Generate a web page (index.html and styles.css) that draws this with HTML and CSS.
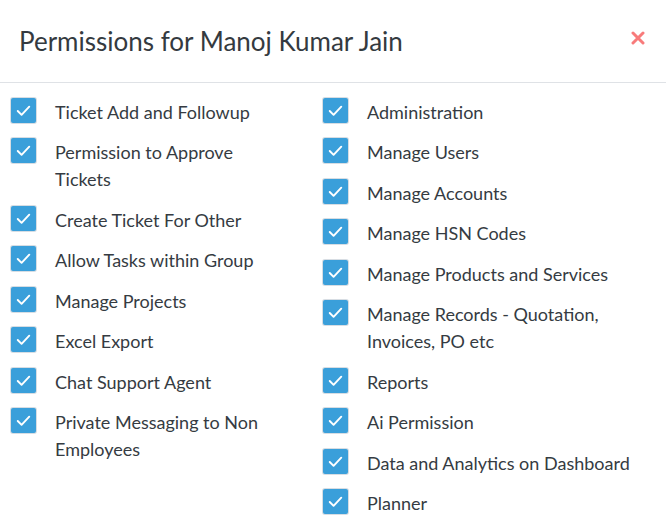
FILE: index.html
```html
<!DOCTYPE html>
<html>
<head>
<meta charset="utf-8">
<link rel="stylesheet" href="styles.css">
</head>
<body>
<div class="modal">
  <div class="header">
    <h2 class="title">Permissions for Manoj Kumar Jain</h2>
    <span class="close"><svg viewBox="0 0 14 14"><path d="M2 2L12 12M12 2L2 12"/></svg></span>
  </div>
  <div class="body">
    <div class="col left">
      <label class="item"><span class="box"><svg viewBox="0 0 26 26"><path d="M7 13.5l4 4 8-8.5"/></svg></span><span class="label">Ticket Add and Followup</span></label>
      <label class="item"><span class="box"><svg viewBox="0 0 26 26"><path d="M7 13.5l4 4 8-8.5"/></svg></span><span class="label">Permission to Approve Tickets</span></label>
      <label class="item"><span class="box"><svg viewBox="0 0 26 26"><path d="M7 13.5l4 4 8-8.5"/></svg></span><span class="label">Create Ticket For Other</span></label>
      <label class="item"><span class="box"><svg viewBox="0 0 26 26"><path d="M7 13.5l4 4 8-8.5"/></svg></span><span class="label">Allow Tasks within Group</span></label>
      <label class="item"><span class="box"><svg viewBox="0 0 26 26"><path d="M7 13.5l4 4 8-8.5"/></svg></span><span class="label">Manage Projects</span></label>
      <label class="item"><span class="box"><svg viewBox="0 0 26 26"><path d="M7 13.5l4 4 8-8.5"/></svg></span><span class="label">Excel Export</span></label>
      <label class="item"><span class="box"><svg viewBox="0 0 26 26"><path d="M7 13.5l4 4 8-8.5"/></svg></span><span class="label">Chat Support Agent</span></label>
      <label class="item"><span class="box"><svg viewBox="0 0 26 26"><path d="M7 13.5l4 4 8-8.5"/></svg></span><span class="label">Private Messaging to Non Employees</span></label>
    </div>
    <div class="col right">
      <label class="item"><span class="box"><svg viewBox="0 0 26 26"><path d="M7 13.5l4 4 8-8.5"/></svg></span><span class="label">Administration</span></label>
      <label class="item"><span class="box"><svg viewBox="0 0 26 26"><path d="M7 13.5l4 4 8-8.5"/></svg></span><span class="label">Manage Users</span></label>
      <label class="item"><span class="box"><svg viewBox="0 0 26 26"><path d="M7 13.5l4 4 8-8.5"/></svg></span><span class="label">Manage Accounts</span></label>
      <label class="item"><span class="box"><svg viewBox="0 0 26 26"><path d="M7 13.5l4 4 8-8.5"/></svg></span><span class="label">Manage HSN Codes</span></label>
      <label class="item"><span class="box"><svg viewBox="0 0 26 26"><path d="M7 13.5l4 4 8-8.5"/></svg></span><span class="label">Manage Products and Services</span></label>
      <label class="item"><span class="box"><svg viewBox="0 0 26 26"><path d="M7 13.5l4 4 8-8.5"/></svg></span><span class="label">Manage Records - Quotation, Invoices, PO etc</span></label>
      <label class="item"><span class="box"><svg viewBox="0 0 26 26"><path d="M7 13.5l4 4 8-8.5"/></svg></span><span class="label">Reports</span></label>
      <label class="item"><span class="box"><svg viewBox="0 0 26 26"><path d="M7 13.5l4 4 8-8.5"/></svg></span><span class="label">Ai Permission</span></label>
      <label class="item"><span class="box"><svg viewBox="0 0 26 26"><path d="M7 13.5l4 4 8-8.5"/></svg></span><span class="label">Data and Analytics on Dashboard</span></label>
      <label class="item"><span class="box"><svg viewBox="0 0 26 26"><path d="M7 13.5l4 4 8-8.5"/></svg></span><span class="label">Planner</span></label>
    </div>
  </div>
</div>
</body>
</html>
```
FILE: styles.css
```css
html, body {
  margin: 0;
  padding: 0;
  background: #ffffff;
}
body {
  font-family: Lato, "Liberation Sans", sans-serif;
  color: #353b42;
}
.modal {
  width: 666px;
}
.header {
  display: flex;
  align-items: center;
  justify-content: space-between;
  height: 83px;
  padding: 0 21px 0 19px;
  border-bottom: 1px solid #dfe2e6;
  box-sizing: border-box;
}
.title {
  margin: 0;
  font-size: 26px;
  font-weight: 400;
  color: #343a40;
  letter-spacing: 0;
}
.close {
  display: flex;
  margin-top: -7px;
}
.close svg {
  width: 14px;
  height: 14px;
  fill: none;
  stroke: #f87b7b;
  stroke-width: 3;
  stroke-linecap: round;
}
.body {
  display: grid;
  grid-template-columns: 312px 1fr;
  padding: 15.5px 0 0 11px;
}
.col {
  display: flex;
  flex-direction: column;
  gap: 13.5px;
}
.item {
  display: flex;
  align-items: flex-start;
  gap: 19px;
  font-size: 18px;
  line-height: 27px;
}
.box {
  flex: none;
  width: 25px;
  height: 25px;
  margin-top: -1px;
  border-radius: 2px;
  background: #3a9fda;
  box-shadow: 0 0 0 1px #d7dde3;
  display: flex;
}
.box svg {
  width: 25px;
  height: 25px;
  fill: none;
  stroke: #ffffff;
  stroke-width: 2;
  stroke-linecap: round;
  stroke-linejoin: round;
}
.left .label {
  max-width: 235px;
}
.right .label {
  max-width: 280px;
}
```
